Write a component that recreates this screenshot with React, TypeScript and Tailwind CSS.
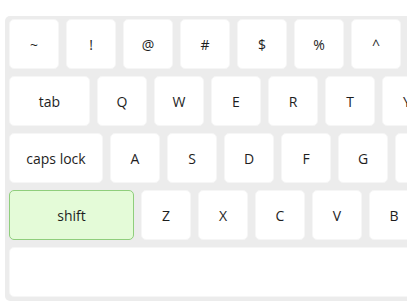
import React from "react";

type K = { label: string; w?: number; active?: boolean };

const rows: K[][] = [
  [{ label: "~" }, { label: "!" }, { label: "@" }, { label: "#" }, { label: "$" }, { label: "%" }, { label: "^" }],
  [{ label: "tab", w: 81 }, { label: "Q" }, { label: "W" }, { label: "E" }, { label: "R" }, { label: "T" }, { label: "Y" }],
  [{ label: "caps lock", w: 94 }, { label: "A" }, { label: "S" }, { label: "D" }, { label: "F" }, { label: "G" }, { label: "H" }],
  [{ label: "shift", w: 125, active: true }, { label: "Z" }, { label: "X" }, { label: "C" }, { label: "V" }, { label: "B" }],
];

function Key({ k }: { k: K }) {
  const w = k.w ?? 50;
  return (
    <div
      className={
        "flex h-[50px] shrink-0 items-center justify-center rounded-[5px] text-[14px] text-[#1e1e1e] " +
        (k.active
          ? "border border-[#8fce7c] bg-[#e4fbd8]"
          : "border border-[#f6f6f6] bg-white")
      }
      style={{ width: w }}
    >
      {k.label}
    </div>
  );
}

export default function App() {
  return (
    <div
      className="relative h-[304px] w-[407px] overflow-hidden bg-white"
      style={{ fontFamily: '"Open Sans", "Noto Sans", sans-serif' }}
    >
      <div className="ml-[5px] mt-[16px] w-[500px] rounded-[5px] bg-[#ececec] pb-[4px] pl-[4px] pt-[3px]">
        <div className="flex flex-col gap-[7px]">
          {rows.map((r, i) => (
            <div key={i} className="flex gap-[7px]">
              {r.map((k) => (
                <Key key={k.label} k={k} />
              ))}
            </div>
          ))}
          <div className="flex gap-[7px]">
            <div className="h-[50px] w-[480px] shrink-0 rounded-[5px] border border-[#f6f6f6] bg-white" />
          </div>
        </div>
      </div>
    </div>
  );
}
